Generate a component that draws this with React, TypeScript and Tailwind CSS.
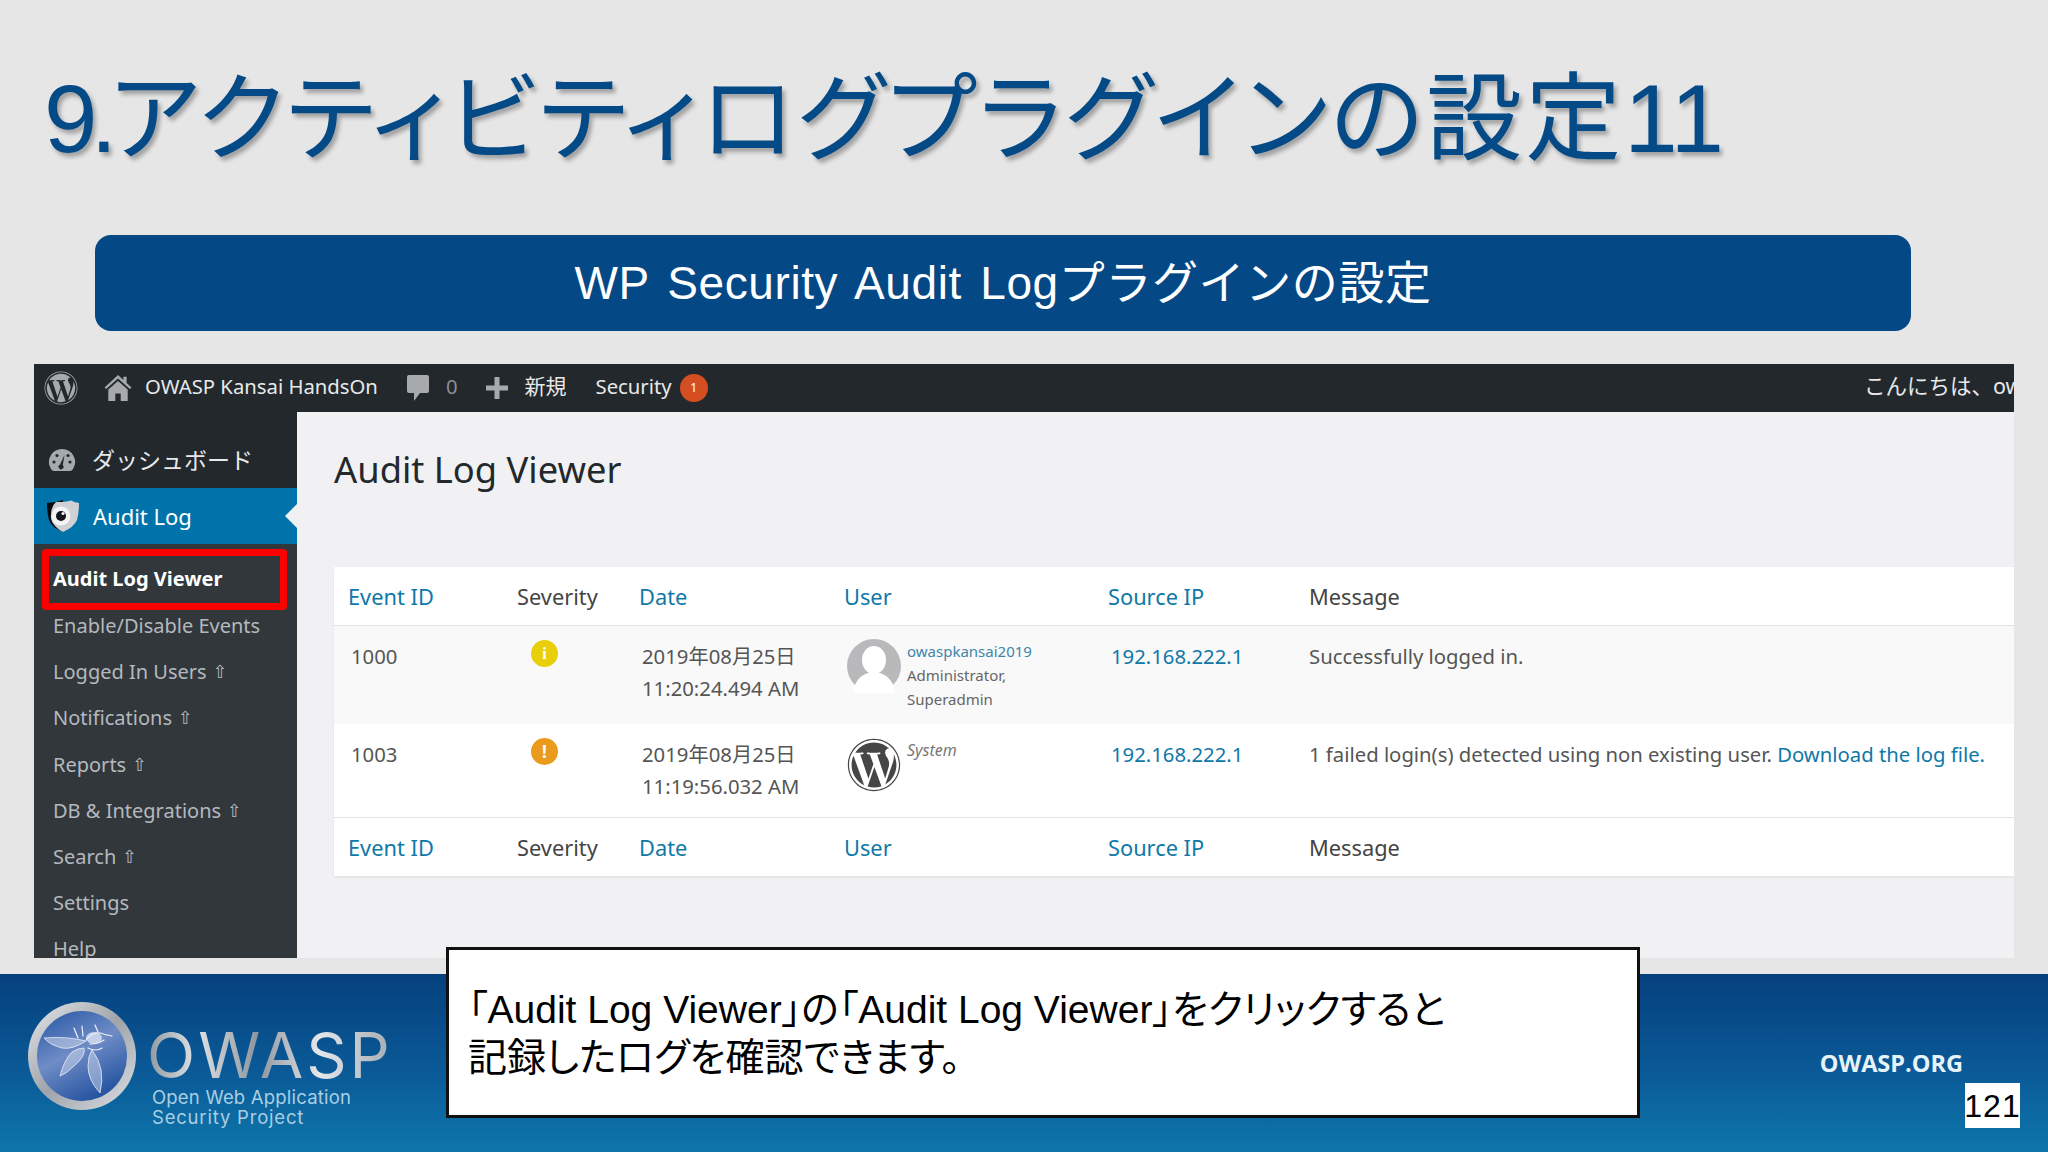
import React from 'react';
import { FaWordpress } from 'react-icons/fa';

const subItems: { label: string; up?: boolean }[] = [
  { label: 'Enable/Disable Events' },
  { label: 'Logged In Users', up: true },
  { label: 'Notifications', up: true },
  { label: 'Reports', up: true },
  { label: 'DB & Integrations', up: true },
  { label: 'Search', up: true },
  { label: 'Settings' },
  { label: 'Help' },
];

const HomeIcon = () => (
  <svg viewBox="0 0 26 26" className="h-[28px] w-[28px] fill-[#a7aaad]">
    <path d="M13 1 L18 5.5 V2.5 H21 V8.3 L25.5 12.5 L24 14 L13 4.2 L2 14 L.5 12.5 Z" />
    <path d="M13 6.5 L22 14.5 V25 H15.5 V18 H10.5 V25 H4 V14.5 Z" />
  </svg>
);

const CommentIcon = () => (
  <svg viewBox="0 0 24 28" className="h-[28px] w-[24px] fill-[#a7aaad]">
    <path d="M3 1 H21 Q23 1 23 3 V17 Q23 19 21 19 H14 L8 27 V19 H3 Q1 19 1 17 V3 Q1 1 3 1 Z" />
  </svg>
);

const PlusIcon = () => (
  <svg viewBox="0 0 22 22" className="h-[22px] w-[22px] fill-[#a7aaad]">
    <path d="M8.5 0 H13.5 V8.5 H22 V13.5 H13.5 V22 H8.5 V13.5 H0 V8.5 H8.5 Z" />
  </svg>
);

const GaugeIcon = () => (
  <svg viewBox="0 0 28 24" className="h-[24px] w-[28px]">
    <path d="M14 1 A13 13 0 0 0 3 21 Q4 23 6 23 H22 Q24 23 25 21 A13 13 0 0 0 14 1 Z" fill="#a7aaad" />
    <path d="M16.5 7 L14.8 17 A2.5 2.5 0 1 1 12 16.5 Z" fill="#23282d" />
    <circle cx="6" cy="14" r="1.6" fill="#23282d" />
    <circle cx="9" cy="7.5" r="1.6" fill="#23282d" />
    <circle cx="22" cy="14" r="1.6" fill="#23282d" />
    <circle cx="20" cy="7.5" r="1.6" fill="#23282d" />
  </svg>
);

const ShieldIcon = () => (
  <svg viewBox="0 0 34 32" className="h-[32px] w-[34px]">
    <path d="M1 3 Q9 3 17 0 V32 Q5 27 3 20 Q1 13 1 3 Z" fill="#0b0b0f" />
    <path d="M10 2 Q20 2 25 0.5 Q29 2.5 33 3 Q33 13 31 20 Q28 27 17 32 Q13 30 10 27 Q4 21 5 15 Q5 6 10 2 Z" fill="#cfd1d4" />
    <circle cx="15" cy="16" r="9.5" fill="#f4f4f4" />
    <circle cx="15" cy="16" r="5" fill="#15151a" />
    <circle cx="17" cy="13.5" r="1.6" fill="#f4f4f4" />
  </svg>
);

const AvatarIcon = () => (
  <svg viewBox="0 0 54 54" className="h-[54px] w-[54px]">
    <circle cx="27" cy="27" r="27" fill="#b9b9bb" />
    <ellipse cx="27" cy="21" rx="12" ry="14" fill="#fff" />
    <path d="M6 54 Q8 38 21 34 H33 Q46 38 48 54 Z" fill="#fff" />
  </svg>
);

const WaspLogo = () => (
  <svg viewBox="0 0 108 108" className="h-[108px] w-[108px]">
    <defs>
      <linearGradient id="ring" x1="0" y1="0" x2="1" y2="1">
        <stop offset="0" stopColor="#e6e8ea" />
        <stop offset="0.5" stopColor="#9ea4aa" />
        <stop offset="1" stopColor="#dfe2e5" />
      </linearGradient>
      <linearGradient id="disc" x1="0.2" y1="0" x2="0.7" y2="1">
        <stop offset="0" stopColor="#2f5da8" />
        <stop offset="0.45" stopColor="#6f8cc6" />
        <stop offset="1" stopColor="#1f4f9e" />
      </linearGradient>
    </defs>
    <circle cx="54" cy="54" r="54" fill="url(#ring)" />
    <circle cx="54" cy="54" r="45" fill="url(#disc)" />
    <g fill="#dfe7f5" fillOpacity="0.45" stroke="#e8eef8" strokeWidth="0.8">
      <path d="M16 36 Q38 34 58 39 Q44 48 34 46 Q22 43 16 36 Z" />
      <path d="M56 46 Q58 54 46 64 Q38 72 32 74 Q36 58 44 50 Q50 46 56 46 Z" />
      <path d="M64 48 Q78 66 72 91 Q60 78 60 64 Q60 54 64 48 Z" />
    </g>
    <g fill="none" stroke="#eef3fb" strokeWidth="1.2" strokeLinecap="round">
      <path d="M58 38 Q64 30 72 31 Q78 33 84 34" />
      <path d="M70 30 L67 23" />
      <path d="M50 36 L46 26" />
      <path d="M55 34 L54 24" />
      <path d="M60 46 Q68 50 74 46" />
      <path d="M62 42 Q70 42 76 38" />
    </g>
    <ellipse cx="66" cy="36" rx="8" ry="6" fill="#e8eef8" fillOpacity="0.7" />
  </svg>
);

const EventHeader = ({ border }: { border?: boolean }) => (
  <div className={`grid h-[59px] grid-cols-[169px_122px_205px_264px_201px_1fr] items-center bg-white pl-[14px] pt-[2px] text-[21.8px] text-[#444] ${border ? 'border-b border-[#e3e3e3]' : 'border-t border-[#e3e3e3]'}`}>
    <a className="text-[#0f78a8]">Event ID</a>
    <span>Severity</span>
    <a className="text-[#0f78a8]">Date</a>
    <a className="text-[#0f78a8]">User</a>
    <a className="text-[#0f78a8]">Source IP</a>
    <span>Message</span>
  </div>
);

const rowGrid = 'grid grid-cols-[169px_122px_205px_264px_201px_1fr] pl-[17px] text-[20.3px] leading-[32px] text-[#555]';

export default function App() {
  return (
    <div className="relative flex h-[1152px] w-[2048px] flex-col overflow-hidden bg-[#e6e6e7] font-['Noto_Sans','Noto_Sans_CJK_JP',sans-serif]">
      {/* title */}
      <div className="flex h-[235px] shrink-0 items-start pl-[44px] pt-[54px]">
        <h1 className="whitespace-nowrap font-['Liberation_Sans','Noto_Sans_CJK_JP',sans-serif] text-[96px] leading-[130px] tracking-[3px] text-[#044a87] [font-feature-settings:'palt'] [text-shadow:3px_4px_4px_rgba(0,0,0,0.3)]">
          <span className="tracking-[-7px]">9.</span>アクティビティログプラグインの設定<span className="tracking-[0px]">11</span>
        </h1>
      </div>

      <div className="mx-[95px] flex h-[96px] w-[1816px] shrink-0 items-center justify-center rounded-[16px] bg-[#044885] font-['Liberation_Sans','Noto_Sans_CJK_JP',sans-serif] text-[46px] tracking-[0.6px] text-white [word-spacing:5px]">
        WP Security Audit Logプラグインの設定
      </div>

      {/* wp admin screenshot */}
      <div className="ml-[34px] mt-[33px] flex h-[594px] w-[1980px] shrink-0 flex-col overflow-hidden">
        <div className="flex h-[48px] shrink-0 items-center bg-[#23282d] text-[20.3px] text-[#e8e9ea]">
          <FaWordpress className="ml-[10px] h-[34px] w-[34px] text-[#a7aaad]" />
          <span className="ml-[26px]"><HomeIcon /></span>
          <span className="-mt-[3px] ml-[13px] whitespace-nowrap">OWASP Kansai HandsOn</span>
          <span className="ml-[28px]"><CommentIcon /></span>
          <span className="-mt-[3px] ml-[16px] text-[#8a8f94]">0</span>
          <span className="ml-[28px]"><PlusIcon /></span>
          <span className="-mt-[3px] ml-[17px] text-[21px]">新規</span>
          <span className="-mt-[3px] ml-[29px]">Security</span>
          <span className="ml-[8px] flex h-[28px] w-[28px] items-center justify-center rounded-full bg-[#d54e21] text-[13px] text-white">1</span>
          <span className="-mt-[3px] ml-auto w-[150px] overflow-hidden whitespace-nowrap text-[21.5px]">こんにちは、owaspkansai2019</span>
        </div>

        <div className="flex min-h-0 flex-1">
          <nav className="w-[263px] shrink-0 overflow-hidden bg-[#32373c]">
            <div className="flex h-[76px] items-center gap-[16px] bg-[#23282d] pl-[14px] pt-[20px] text-[23px] text-[#e8e9ea]">
              <GaugeIcon />
              <span>ダッシュボード</span>
            </div>
            <div className="relative flex h-[56px] items-center gap-[13px] bg-[#0073aa] pl-[12px] text-[22px] text-white">
              <ShieldIcon />
              <span>Audit Log</span>
              <span className="absolute right-0 top-[16px] h-0 w-0 border-y-[12px] border-r-[12px] border-y-transparent border-r-[#f1f1f3]" />
            </div>
            <div className="relative flex h-[59px] items-center pl-[19px] pt-[10px] text-[20px] font-bold text-white">
              Audit Log Viewer
              <span className="absolute left-[8px] top-[5px] h-[61px] w-[245px] rounded-[4px] border-[7px] border-[#fc0000]" />
            </div>
            {subItems.map((item) => (
              <div key={item.label} className="flex h-[46.2px] items-center gap-[6px] pl-[19px] text-[20px] text-[#b4b9be]">
                {item.label}
                {item.up && <span className="font-['DejaVu_Sans'] text-[18px] leading-none">⇧</span>}
              </div>
            ))}
          </nav>

          <main className="min-w-0 flex-1 bg-[#f1f1f3] pl-[37px]">
            <h2 className="pt-[30px] text-[36.3px] font-normal leading-[54px] text-[#23282d]">Audit Log Viewer</h2>
            <div className="mt-[71px] shadow-[0_1px_2px_rgba(0,0,0,0.08)]">
              <EventHeader border />
              <div className={`${rowGrid} h-[98px] bg-[#f9f9f9] pt-[14px]`}>
                <span>1000</span>
                <span className="pl-[11px]"><span className="flex h-[27px] w-[27px] items-center justify-center rounded-full bg-[#e9cf0a] font-['Liberation_Serif'] text-[16px] font-bold leading-none text-white">i</span></span>
                <span className="whitespace-pre-line">{'2019年08月25日\n11:20:24.494 AM'}</span>
                <span className="-mt-[1px] flex gap-[6px]">
                  <AvatarIcon />
                  <span className="flex flex-col text-[15px] leading-[24px] text-[#666]">
                    <a className="text-[#3f86a8]">owaspkansai2019</a>
                    <span>Administrator,</span>
                    <span>Superadmin</span>
                  </span>
                </span>
                <a className="text-[#0f78a8]">192.168.222.1</a>
                <span className="-ml-[3px]">Successfully logged in.</span>
              </div>
              <div className={`${rowGrid} h-[93px] bg-white pt-[14px]`}>
                <span>1003</span>
                <span className="pl-[11px]"><span className="flex h-[27px] w-[27px] items-center justify-center rounded-full bg-[#ea9a1c] text-[17px] font-bold leading-none text-white">!</span></span>
                <span className="whitespace-pre-line">{'2019年08月25日\n11:19:56.032 AM'}</span>
                <span className="flex gap-[6px]">
                  <FaWordpress className="h-[54px] w-[54px] text-[#464646]" />
                  <span className="text-[16px] italic leading-[24px] text-[#777]">System</span>
                </span>
                <a className="text-[#0f78a8]">192.168.222.1</a>
                <span className="-ml-[3px] whitespace-nowrap">
                  1 failed login(s) detected using non existing user. <a className="text-[#0f78a8]">Download the log file.</a>
                </span>
              </div>
              <EventHeader />
            </div>
          </main>
        </div>
      </div>

      {/* footer */}
      <footer className="mt-[16px] flex min-h-0 flex-1 items-start bg-[linear-gradient(180deg,#05407e_0%,#0a5a97_55%,#0e76ab_100%)]">
        <div className="ml-[28px] mt-[28px]"><WaspLogo /></div>
        <div className="ml-[11px] mt-[51px] flex flex-col">
          <span className="bg-[linear-gradient(90deg,#8f979f_0%,#dfe3e6_20%,#8d959d_45%,#e4e7ea_70%,#a4abb2_100%)] bg-clip-text font-['Inter'] text-[63px] font-normal leading-[61px] tracking-[3px] text-transparent">OWASP</span>
          <span className="ml-[5px] mt-[1px] font-['Inter'] text-[18.5px] leading-[20px] tracking-[0.2px] text-[#a9cfe3]">Open Web Application</span>
          <span className="ml-[5px] font-['Inter'] text-[18.5px] leading-[20px] tracking-[0.8px] text-[#a9cfe3]">Security Project</span>
        </div>
        <span className="ml-auto mr-[85px] mt-[75px] font-['Open_Sans'] text-[23.5px] font-bold leading-[28px] text-[#e6f4fa]">OWASP.ORG</span>
      </footer>

      {/* callout */}
      <div className="absolute left-[446px] top-[947px] flex h-[171px] w-[1194px] flex-col justify-center border-[3px] border-[#111] bg-white pl-[19px] pt-[2px] font-['Liberation_Sans','Noto_Sans_CJK_JP',sans-serif] text-[39px] leading-[48px] text-black [font-feature-settings:'palt']">
        <span>「Audit Log Viewer」の「Audit Log Viewer」をクリックすると</span>
        <span>記録したログを確認できます。</span>
      </div>

      {/* page number */}
      <div className="absolute left-[1965px] top-[1083px] flex h-[45px] w-[55px] items-center justify-center bg-white font-['Liberation_Sans'] text-[32px] tracking-[1px] text-black">
        121
      </div>
    </div>
  );
}
